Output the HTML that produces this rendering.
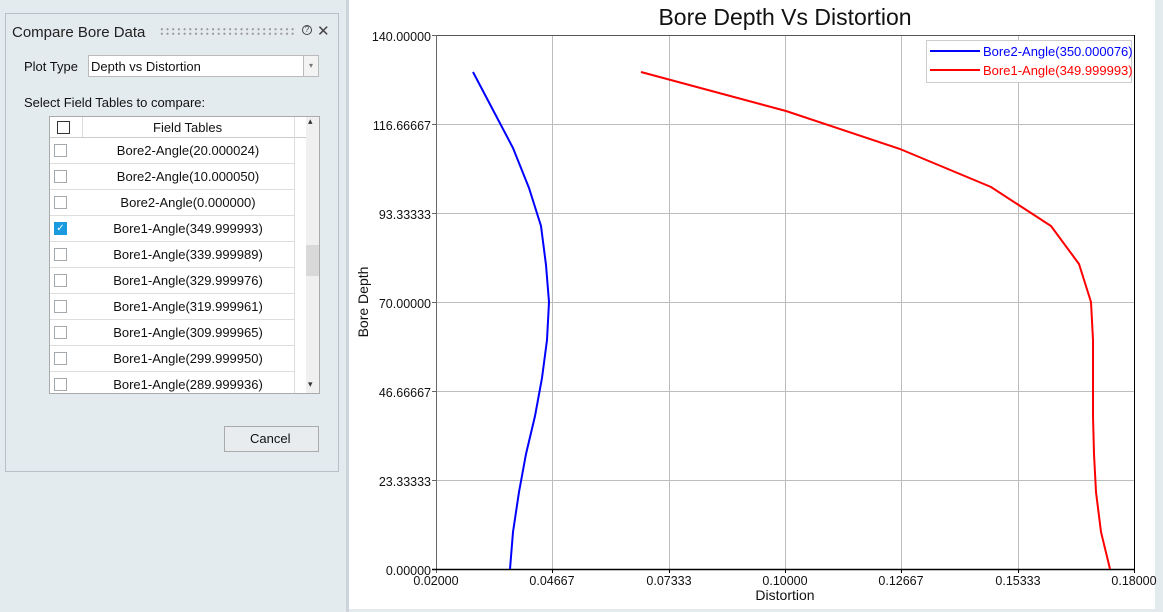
<!DOCTYPE html>
<html><head><meta charset="utf-8"><style>
body{margin:0;width:1163px;height:612px;background:#e4ebef;font-family:"Liberation Sans",sans-serif;position:relative;overflow:hidden}
.a{position:absolute}
.dlg{left:5px;top:13px;width:332px;height:457px;border:1px solid #b9c1c6}
.t{font-size:15px;color:#222}
.f{font-size:13px;color:#111}
.cb{width:11px;height:11px;border:1px solid #a4a9ad;background:#fff}
</style></head><body>
<div class="a dlg"></div>
<div class="a t" style="left:12px;top:24px">Compare Bore Data</div>
<div class="a" style="left:159px;top:27px;width:137px;height:9px;background:radial-gradient(circle,#999 0.9px,transparent 1.3px) 0 0/5.7px 4.5px"></div>
<div class="a" style="left:302px;top:25px;width:8px;height:8px;border:1.3px solid #444;border-radius:50%;font-size:8px;line-height:8px;text-align:center;color:#444">?</div>
<div class="a" style="left:317px;top:22px;font-size:15px;color:#444">✕</div>
<div class="a f" style="left:24px;top:59px">Plot Type</div>
<div class="a" style="left:88px;top:55px;width:214px;height:20px;background:#fff;border:1px solid #bbb"></div>
<div class="a f" style="left:91px;top:59px">Depth vs Distortion</div>
<div class="a" style="left:303px;top:55px;width:14px;height:20px;border:1px solid #bbb;background:#f3f3f3;font-size:8px;color:#777;text-align:center;line-height:20px">▾</div>
<div class="a f" style="left:24px;top:95px">Select Field Tables to compare:</div>
<div class="a" style="left:49px;top:116px;width:269px;height:276px;border:1px solid #aaa;background:#fff;overflow:hidden">
 <div class="a" style="left:0;top:0;width:256px;height:20px;border-bottom:1px solid #ccc;background:#fff"></div>
 <div class="a" style="left:32px;top:0;width:1px;height:20px;background:#ddd"></div>
 <div class="a" style="left:244px;top:0;width:1px;height:276px;background:#ddd"></div>
 <div class="a" style="left:7px;top:4px;width:11px;height:11px;border:1px solid #333"></div>
 <div class="a f" style="left:103px;top:3px">Field Tables</div>
 <div class="a" style="left:256px;top:0;width:13px;height:276px;background:#f0f0f0"></div>
 <div class="a" style="left:256px;top:128px;width:13px;height:31px;background:#d9d9d9"></div>
 <div class="a" style="left:258px;top:-1px;font-size:9px;color:#333">▴</div>
 <div class="a" style="left:258px;top:262px;font-size:9px;color:#333">▾</div>
</div>
<div class="a" style="left:224px;top:426px;width:93px;height:24px;border:1px solid #aaa;background:#e8ecef"></div>
<div class="a f" style="left:250px;top:431px">Cancel</div>
<div class="a" style="left:346px;top:0;width:3px;height:612px;background:#cdd5da"></div>
<div class="a" style="left:349px;top:0;width:806px;height:609px;background:#fff"></div>
<svg class="a" style="left:0;top:0" width="1163" height="612" font-family="Liberation Sans, sans-serif">
<g stroke="#bdbdbd" stroke-width="1">
<line x1="552.5" y1="35" x2="552.5" y2="569"/><line x1="669.5" y1="35" x2="669.5" y2="569"/><line x1="785.5" y1="35" x2="785.5" y2="569"/><line x1="901.5" y1="35" x2="901.5" y2="569"/><line x1="1018.5" y1="35" x2="1018.5" y2="569"/>
<line x1="436" y1="124.5" x2="1134" y2="124.5"/><line x1="436" y1="213.5" x2="1134" y2="213.5"/><line x1="436" y1="302.5" x2="1134" y2="302.5"/><line x1="436" y1="391.5" x2="1134" y2="391.5"/><line x1="436" y1="480.5" x2="1134" y2="480.5"/>
</g>
<line x1="436" y1="35.5" x2="1134" y2="35.5" stroke="#555"/>
<line x1="436.5" y1="35" x2="436.5" y2="573" stroke="#666"/>
<line x1="1134.5" y1="35" x2="1134.5" y2="573" stroke="#000"/>
<line x1="432" y1="569.5" x2="1135" y2="569.5" stroke="#000" stroke-width="1.5"/>
<g stroke="#666"><line x1="432" y1="124.5" x2="436" y2="124.5"/><line x1="432" y1="213.5" x2="436" y2="213.5"/><line x1="432" y1="302.5" x2="436" y2="302.5"/><line x1="432" y1="391.5" x2="436" y2="391.5"/><line x1="432" y1="480.5" x2="436" y2="480.5"/><line x1="432" y1="35.5" x2="436" y2="35.5"/></g>
<g stroke="#000"><line x1="552.5" y1="569" x2="552.5" y2="573"/><line x1="669.5" y1="569" x2="669.5" y2="573"/><line x1="785.5" y1="569" x2="785.5" y2="573"/><line x1="901.5" y1="569" x2="901.5" y2="573"/><line x1="1018.5" y1="569" x2="1018.5" y2="573"/></g>
<g font-size="12.5" fill="#111" text-anchor="end">
<text x="431" y="41">140.00000</text><text x="431" y="130">116.66667</text><text x="431" y="219">93.33333</text><text x="431" y="308">70.00000</text><text x="431" y="397">46.66667</text><text x="431" y="486">23.33333</text><text x="431" y="575">0.00000</text></g>
<g font-size="12.5" fill="#111" text-anchor="middle">
<text x="436" y="585">0.02000</text><text x="552" y="585">0.04667</text><text x="669" y="585">0.07333</text><text x="785" y="585">0.10000</text><text x="901" y="585">0.12667</text><text x="1018" y="585">0.15333</text><text x="1134" y="585">0.18000</text>
<text x="785" y="600" font-size="14">Distortion</text>
<text x="785" y="25" font-size="23">Bore Depth Vs Distortion</text></g>
<text transform="translate(368,302) rotate(-90)" font-size="14" text-anchor="middle" fill="#111">Bore Depth</text>
<polyline fill="none" stroke="#0000ff" stroke-width="2" points="473,72 493,110 513,148 529,188 541,226 546,265 549,302 547,340 542,378 535,416 526,454 519,492 513,532 510,569"/>
<polyline fill="none" stroke="#ff0000" stroke-width="2" points="641,72 786,111 900,149 991,187 1051,226 1079,264 1091,302 1093,340 1093,378 1093,416 1094,454 1096,492 1101,532 1110,569"/>
<rect x="926.5" y="40.5" width="205" height="42" fill="#fff" stroke="#ccc"/>
<line x1="930" y1="51" x2="980" y2="51" stroke="#00f" stroke-width="2"/>
<line x1="930" y1="70" x2="980" y2="70" stroke="#f00" stroke-width="2"/>
<text x="983" y="56" font-size="13" fill="#00f">Bore2-Angle(350.000076)</text>
<text x="983" y="75" font-size="13" fill="#f00">Bore1-Angle(349.999993)</text>
</svg>
<div class="a" style="left:50px;top:138px;width:244px;height:254px;overflow:hidden">
<div style="position:relative">
<script>
var n=["Bore2-Angle(20.000024)","Bore2-Angle(10.000050)","Bore2-Angle(0.000000)","Bore1-Angle(349.999993)","Bore1-Angle(339.999989)","Bore1-Angle(329.999976)","Bore1-Angle(319.999961)","Bore1-Angle(309.999965)","Bore1-Angle(299.999950)","Bore1-Angle(289.999936)"];
for(var i=0;i<n.length;i++){var c=i==3?'<div class="a" style="left:4px;top:6px;width:13px;height:13px;background:#1a9be0;color:#fff;font-size:10px;line-height:13px;text-align:center">✓</div>':'<div class="a cb" style="left:4px;top:6px"></div>';
document.write('<div class="a" style="left:0;top:'+(i*26)+'px;width:244px;height:25px;border-bottom:1px solid #ddd;background:#fff">'+c+'<span style="position:absolute;left:32px;width:212px;text-align:center;top:5px;font-size:13px;color:#111">'+n[i]+'</span></div>');}
</script>
</div></div>
</body></html>
